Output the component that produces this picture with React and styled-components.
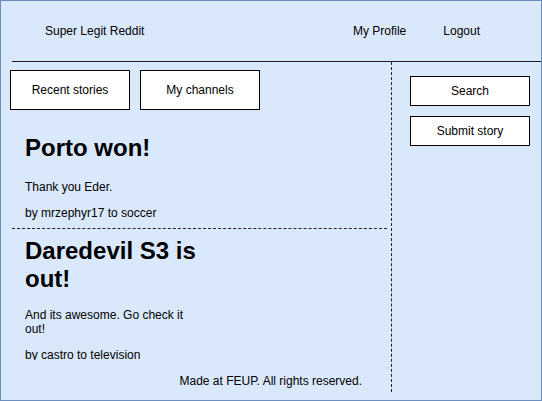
import React from "react";
import styled, { createGlobalStyle } from "styled-components";

const GlobalStyle = createGlobalStyle`
  * { box-sizing: border-box; }
  body {
    margin: 0;
    font-family: "Liberation Sans", Arial, sans-serif;
    color: #000;
  }
`;

const Frame = styled.div`
  width: 542px;
  height: 401px;
  border: 1px solid #6c8ebf;
  background: #dae8fc;
  display: flex;
  flex-direction: column;
  overflow: hidden;
`;

const Header = styled.div`
  height: 60px;
  display: flex;
  align-items: center;
  padding: 0 61px 0 44px;
  font-size: 12px;
`;

const Nav = styled.nav`
  margin-left: auto;
  display: flex;
  gap: 37px;
`;

const Rule = styled.div`
  margin-left: 11px;
  border-top: 1px solid #1c1c1c;
`;

const Body = styled.div`
  height: 330px;
  display: grid;
  grid-template-columns: 390px 1fr;
`;

const Main = styled.div`
  display: flex;
  flex-direction: column;
`;

const Tabs = styled.div`
  display: flex;
  gap: 10px;
  padding: 8px 0 0 9px;
`;

const Box = styled.div`
  width: 120px;
  height: ${(p) => (p.tall ? "40px" : "30px")};
  border: 1px solid #000;
  background: #fff;
  display: flex;
  align-items: center;
  justify-content: center;
  font-size: 12px;
`;

const Stories = styled.div`
  height: 250px;
  overflow: hidden;
`;

const Story = styled.article`
  margin-left: 11px;
  padding: ${(p) => (p.first ? "24px" : "8px")} 0 8px 13px;
  border-bottom: ${(p) => (p.first ? "1px dashed #222" : "none")};
  width: ${(p) => (p.first ? "375px" : "auto")};
`;

const Title = styled.h2`
  margin: 0 0 ${(p) => (p.wrapped ? "15px" : "18px")};
  width: 180px;
  font-size: 24px;
  line-height: 28px;
  font-weight: bold;
`;

const Text = styled.p`
  margin: 0 0 12px;
  width: 175px;
  font-size: 12px;
  line-height: 14px;
  &:last-child { margin-bottom: 0; }
`;

const Footer = styled.footer`
  margin-top: auto;
  padding: 0 29px 4px 0;
  text-align: right;
  font-size: 12px;
  line-height: 14px;
`;

const Side = styled.aside`
  border-left: 1px dashed #222;
  padding: 14px 0 0 18px;
  display: flex;
  flex-direction: column;
  gap: 10px;
`;

const stories = [
  { title: "Porto won!", text: "Thank you Eder.", by: "by mrzephyr17 to soccer" },
  {
    title: "Daredevil S3 is out!",
    text: "And its awesome. Go check it out!",
    by: "by castro to television",
  },
];

export default function App() {
  return (
    <>
      <GlobalStyle />
      <Frame>
        <Header>
          <span>Super Legit Reddit</span>
          <Nav>
            <span>My Profile</span>
            <span>Logout</span>
          </Nav>
        </Header>
        <Rule />
        <Body>
          <Main>
            <Tabs>
              <Box tall>Recent stories</Box>
              <Box tall>My channels</Box>
            </Tabs>
            <Stories>
              {stories.map((s, i) => (
                <Story key={i} first={i === 0}>
                  <Title wrapped={i > 0}>{s.title}</Title>
                  <Text>{s.text}</Text>
                  <Text>{s.by}</Text>
                </Story>
              ))}
            </Stories>
            <Footer>Made at FEUP. All rights reserved.</Footer>
          </Main>
          <Side>
            <Box>Search</Box>
            <Box>Submit story</Box>
          </Side>
        </Body>
      </Frame>
    </>
  );
}
